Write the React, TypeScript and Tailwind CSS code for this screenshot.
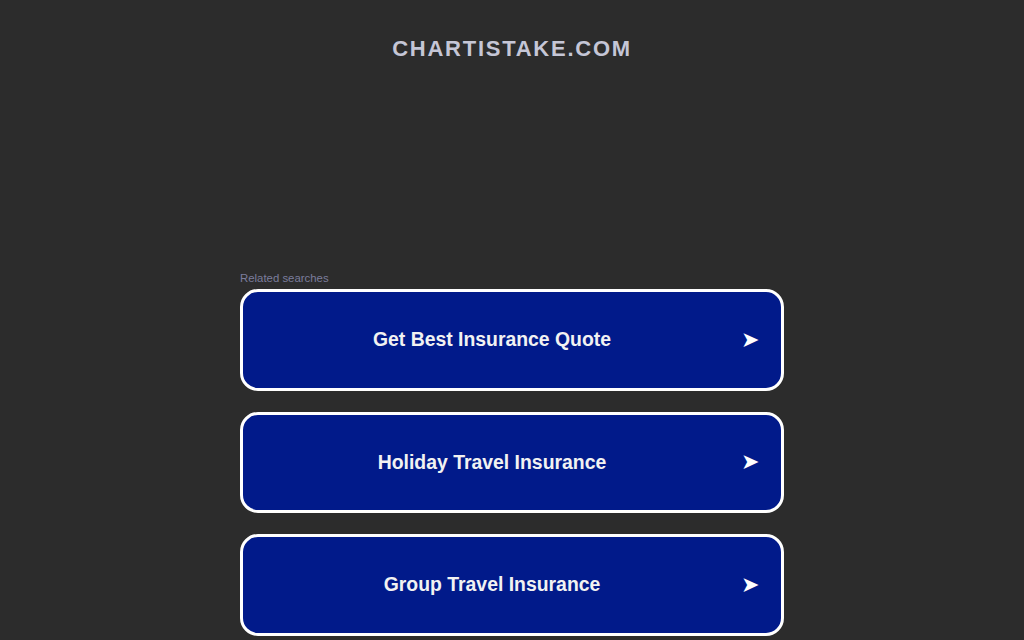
const searches = [
  "Get Best Insurance Quote",
  "Holiday Travel Insurance",
  "Group Travel Insurance",
];

export default function App() {
  return (
    <div className="min-h-screen bg-[#2c2c2c] font-['Liberation_Sans',Arial,sans-serif] overflow-hidden">
      <div className="pt-[35px] text-center">
        <h1 className="text-[22px] leading-[28px] font-bold tracking-[1.75px] text-[#c5c6d6]">
          CHARTISTAKE.COM
        </h1>
      </div>
      <div className="mx-auto w-[544px] pt-[209px]">
        <div className="text-[11.4px] leading-[13px] text-[#7b7d9c] mb-[4px]">Related searches</div>
        <div className="flex flex-col gap-[21px]">
          {searches.map((s) => (
            <a
              key={s}
              href="#"
              className="flex items-center h-[101.5px] rounded-[18px] border-[3px] border-white bg-[#011a8a] pl-[22px] pr-[22px]"
            >
              <span className="flex-1 text-center text-[19.4px] font-bold text-[#f2f2f2]">{s}</span>
              <span className="w-[40px] text-right text-[22px] leading-none text-white">➤</span>
            </a>
          ))}
        </div>
      </div>
    </div>
  );
}
